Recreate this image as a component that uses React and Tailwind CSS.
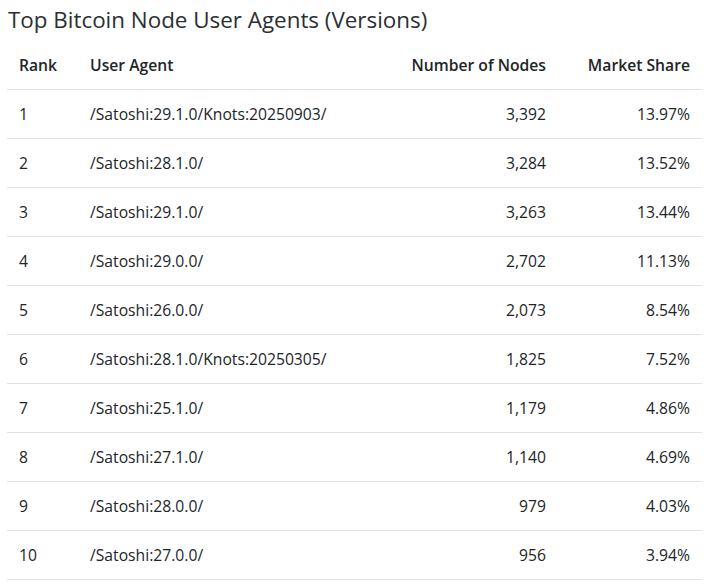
import React from 'react';

const rows = [
  [1, '/Satoshi:29.1.0/Knots:20250903/', '3,392', '13.97%'],
  [2, '/Satoshi:28.1.0/', '3,284', '13.52%'],
  [3, '/Satoshi:29.1.0/', '3,263', '13.44%'],
  [4, '/Satoshi:29.0.0/', '2,702', '11.13%'],
  [5, '/Satoshi:26.0.0/', '2,073', '8.54%'],
  [6, '/Satoshi:28.1.0/Knots:20250305/', '1,825', '7.52%'],
  [7, '/Satoshi:25.1.0/', '1,179', '4.86%'],
  [8, '/Satoshi:27.1.0/', '1,140', '4.69%'],
  [9, '/Satoshi:28.0.0/', '979', '4.03%'],
  [10, '/Satoshi:27.0.0/', '956', '3.94%'],
];

export default function App() {
  return (
    <div
      className="bg-white text-[#212529] px-2"
      style={{ fontFamily: '"Open Sans", "Noto Sans", sans-serif' }}
    >
      <h2 className="text-[22.4px] leading-[26px] pt-[7px] mb-[8px] text-[#2b2f33]">
        Top Bitcoin Node User Agents (Versions)
      </h2>
      <table className="w-[695px] -ml-px border-collapse text-[15.7px] leading-6 table-fixed whitespace-nowrap">
        <thead>
          <tr className="border-b border-[#dee2e6]">
            <th className="w-[71px] px-3 py-3 text-left font-semibold">Rank</th>
            <th className="px-3 py-3 text-left font-semibold">User Agent</th>
            <th className="w-[160px] px-3 py-3 text-right font-semibold">Number of Nodes</th>
            <th className="w-[144px] px-3 py-3 text-right font-semibold">Market Share</th>
          </tr>
        </thead>
        <tbody>
          {rows.map(([rank, agent, nodes, share]) => (
            <tr key={rank} className="border-b border-[#dee2e6]">
              <td className="px-3 py-3">{rank}</td>
              <td className="px-3 py-3">{agent}</td>
              <td className="px-3 py-3 text-right">{nodes}</td>
              <td className="px-3 py-3 text-right">{share}</td>
            </tr>
          ))}
        </tbody>
      </table>
    </div>
  );
}
